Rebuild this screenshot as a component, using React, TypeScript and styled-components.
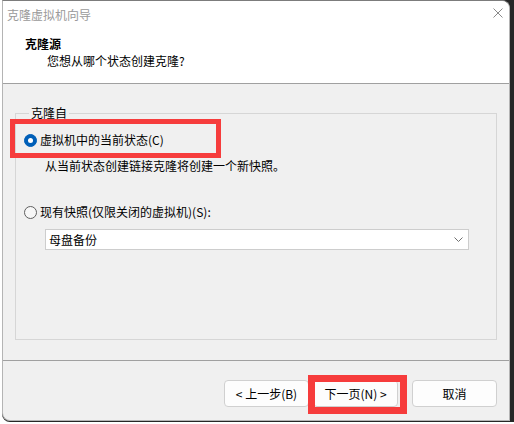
import React from "react";
import styled, { createGlobalStyle } from "styled-components";

const font = `"Noto Sans CJK SC", "Noto Sans", "Liberation Sans", sans-serif`;
const red = "#f63c3c";

const GlobalStyle = createGlobalStyle`
  html, body {
    margin: 0;
    padding: 0;
    background: #ffffff;
  }
  body {
    font-family: ${font};
    font-size: 12px;
    color: #000;
  }
`;

const Page = styled.div`
  width: 514px;
  height: 424px;
  padding-left: 2px;
  box-sizing: border-box;
  background: #ffffff;
`;

const Frame = styled.div`
  display: flex;
  width: 512px;
  height: 422px;
  background: #262626;
  border-bottom-left-radius: 8px;
`;

const Window = styled.div`
  position: relative;
  display: flex;
  flex-direction: column;
  width: 508px;
  height: 421px;
  box-sizing: border-box;
  background: #f0f0f0;
  border: 1px solid #b4b4b4;
  border-top-color: #7c7c7c;
  border-top-right-radius: 8px;
  border-bottom-left-radius: 8px;
  overflow: hidden;
`;

const TitleBar = styled.div`
  display: flex;
  align-items: center;
  justify-content: space-between;
  height: 27px;
  padding: 0 6px 0 4px;
  background: #ffffff;
`;

const Title = styled.span`
  color: #9a9a9a;
  font-size: 12px;
  line-height: 16px;
`;

const Close = styled.svg`
  width: 10px;
  height: 10px;
  margin-top: -4px;
`;

const Header = styled.div`
  height: 56px;
  box-sizing: border-box;
  padding: 8px 0 0 22px;
  background: #ffffff;
  border-bottom: 1px solid #a0a0a0;
`;

const HeaderTitle = styled.div`
  font-weight: 700;
  line-height: 16px;
`;

const HeaderSub = styled.div`
  line-height: 16px;
  margin: 1px 0 0 22px;
`;

const Body = styled.div`
  flex: 1;
  padding: 21px 12px 0 12px;
`;

const Group = styled.fieldset`
  margin: 0;
  height: 235px;
  box-sizing: border-box;
  padding: 11px 0 0 8px;
  border: 1px solid #d6d6d6;
  border-radius: 0;
`;

const Legend = styled.legend`
  padding: 0 2px;
  margin-left: 5px;
  line-height: 16px;
`;

const RadioRow = styled.div<{ $gap: number }>`
  position: relative;
  display: flex;
  align-items: center;
  gap: 3px;
  height: 16px;
  margin-top: ${(p) => p.$gap}px;
`;

const RadioDot = styled.span<{ $checked?: boolean }>`
  position: relative;
  width: 13px;
  height: 13px;
  box-sizing: border-box;
  border-radius: 50%;
  background: ${(p) => (p.$checked ? "#005fb8" : "#f7f7f7")};
  border: 1px solid ${(p) => (p.$checked ? "#005fb8" : "#5f5f5f")};

  &::after {
    content: "";
    display: ${(p) => (p.$checked ? "block" : "none")};
    position: absolute;
    left: 3px;
    top: 3px;
    width: 5px;
    height: 5px;
    border-radius: 50%;
    background: #ffffff;
  }
`;

const Label = styled.span`
  line-height: 16px;
  white-space: nowrap;
`;

const Hint = styled.div`
  line-height: 16px;
  margin: 10px 0 0 21px;
`;

const Select = styled.div`
  display: flex;
  align-items: center;
  justify-content: space-between;
  width: 424px;
  height: 21px;
  box-sizing: border-box;
  margin: 9px 0 0 21px;
  padding: 0 5px 0 3px;
  background: #ffffff;
  border: 1px solid #cdcdcd;
`;

const Chevron = styled.svg`
  width: 9px;
  height: 6px;
`;

const Highlight = styled.span<{ $l: number; $t: number; $w: number; $h: number; $b: number }>`
  position: absolute;
  left: ${(p) => p.$l}px;
  top: ${(p) => p.$t}px;
  width: ${(p) => p.$w}px;
  height: ${(p) => p.$h}px;
  box-sizing: border-box;
  border: ${(p) => p.$b}px solid ${red};
  pointer-events: none;
`;

const Footer = styled.div`
  display: flex;
  justify-content: flex-end;
  align-items: flex-start;
  height: 60px;
  box-sizing: border-box;
  padding: 19px 12px 0 0;
  border-top: 1px solid #a0a0a0;
`;

const Button = styled.div<{ $space?: number }>`
  position: relative;
  display: flex;
  align-items: center;
  justify-content: center;
  width: 85px;
  height: 27px;
  box-sizing: border-box;
  margin-left: ${(p) => p.$space ?? 0}px;
  background: #fdfdfd;
  border: 1px solid #d0d0d0;
  border-radius: 4px;
  font-size: 12px;
  line-height: 16px;
  white-space: nowrap;
`;

export default function App() {
  return (
    <Page>
      <GlobalStyle />
      <Frame>
        <Window>
          <TitleBar>
            <Title>克隆虚拟机向导</Title>
            <Close viewBox="0 0 10 10">
              <path d="M0.5 0.5 L9.5 9.5 M9.5 0.5 L0.5 9.5" stroke="#8a8a8a" strokeWidth="1" />
            </Close>
          </TitleBar>
          <Header>
            <HeaderTitle>克隆源</HeaderTitle>
            <HeaderSub>您想从哪个状态创建克隆?</HeaderSub>
          </Header>
          <Body>
            <Group>
              <Legend>克隆自</Legend>
              <RadioRow $gap={0}>
                <RadioDot $checked />
                <Label>虚拟机中的当前状态(C)</Label>
                <Highlight $l={-14} $t={-13} $w={211} $h={39} $b={5} />
              </RadioRow>
              <Hint>从当前状态创建链接克隆将创建一个新快照。</Hint>
              <RadioRow $gap={30}>
                <RadioDot />
                <Label>现有快照(仅限关闭的虚拟机)(S):</Label>
              </RadioRow>
              <Select>
                <span>母盘备份</span>
                <Chevron viewBox="0 0 9 6">
                  <path d="M0.5 0.5 L4.5 4.5 L8.5 0.5" fill="none" stroke="#707070" strokeWidth="1" />
                </Chevron>
              </Select>
            </Group>
          </Body>
          <Footer>
            <Button>&lt; 上一步(B)</Button>
            <Button $space={4}>
              下一页(N) &gt;
              <Highlight $l={-6} $t={-6} $w={99} $h={39} $b={7} />
            </Button>
            <Button $space={14}>取消</Button>
          </Footer>
        </Window>
      </Frame>
    </Page>
  );
}
